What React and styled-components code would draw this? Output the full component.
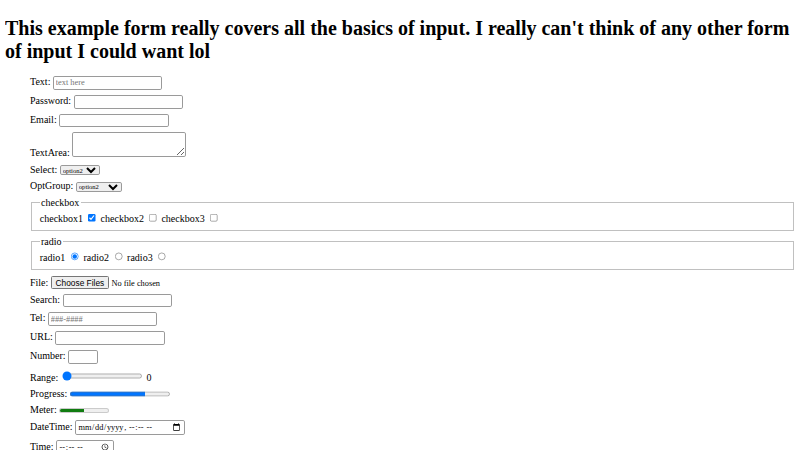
import React from "react";
import styled, { createGlobalStyle } from "styled-components";

const GlobalStyle = createGlobalStyle`
    html {
        zoom: 0.625;
    }

    body {
        margin: 8px;
        font-family: "Liberation Serif", "Times New Roman", serif;
        font-size: 16px;
        color: #000;
        background: #fff;
    }
`;

const StyledTitle = styled.h1`
    font-size: 2em;
    font-weight: bold;
    margin: 19px 0 21px;
`;

const StyledForm = styled.form`
    padding-left: 40px;
`;

const StyledRow = styled.div`
    padding-top: ${(p) => p.$extra || 0}px;
    margin-bottom: 8px;
`;

const StyledGroup = styled.fieldset`
    margin: 0 2px 8px;
    border: 2px groove #c0c0c0;
    padding: 0.35em 0.75em 0.625em;
`;

const StyledInput = styled.input`
    font-family: "Liberation Serif", "Times New Roman", serif;
    font-size: 13.33px;
    box-sizing: border-box;
    width: ${(p) => p.$width || 175}px;
    height: ${(p) => p.$height || 22}px;
    padding: 1px 3px;
    border: 1.6px solid #9a9a9a;
    border-radius: 3px;
`;

const StyledFile = styled.input`
    font-family: "Liberation Serif", "Times New Roman", serif;
    font-size: 13.33px;

    &::file-selector-button {
        font-family: "Liberation Sans", Arial, sans-serif;
        height: 20px;
    }
`;

const StyledTextArea = styled.textarea`
    box-sizing: border-box;
    width: 182px;
    height: 39px;
    border: 1.6px solid #9a9a9a;
    border-radius: 3px;
`;

const StyledSelect = styled.select`
    font-family: "Liberation Serif", "Times New Roman", serif;
    font-size: 10.5px;
    box-sizing: border-box;
    height: 17px;
    width: ${(p) => p.$width}px;
    border: 1.6px solid #9a9a9a;
    border-radius: 3px;
`;

const checks = ["checkbox1", "checkbox2", "checkbox3"];
const radios = ["radio1", "radio2", "radio3"];

const App = () => {
    return (
        <>
            <GlobalStyle />
            <StyledTitle>
                This example form really covers all the basics of input. I really can't think of any
                other form of input I could want lol
            </StyledTitle>
            <StyledForm onSubmit={(e) => e.preventDefault()}>
                <StyledRow>
                    <label>Text: </label>
                    <StyledInput type="text" placeholder="text here" />
                </StyledRow>
                <StyledRow>
                    <label>Password: </label>
                    <StyledInput type="password" />
                </StyledRow>
                <StyledRow>
                    <label>Email: </label>
                    <StyledInput type="email" />
                </StyledRow>
                <StyledRow>
                    <label>TextArea: </label>
                    <StyledTextArea />
                </StyledRow>
                <StyledRow>
                    <label>Select: </label>
                    <StyledSelect $width={65} defaultValue="option2">
                        <option value="option1">option1</option>
                        <option value="option2">option2</option>
                        <option value="option3">option3</option>
                    </StyledSelect>
                </StyledRow>
                <StyledRow>
                    <label>OptGroup: </label>
                    <StyledSelect $width={74} defaultValue="option2">
                        <optgroup label="group one">
                            <option value="option1">option1</option>
                            <option value="option2">option2</option>
                        </optgroup>
                        <optgroup label="group two">
                            <option value="option3">option3</option>
                            <option value="option4">option4</option>
                        </optgroup>
                    </StyledSelect>
                </StyledRow>
                <StyledGroup>
                    <legend>checkbox</legend>
                    {checks.map((name, i) => (
                        <React.Fragment key={name}>
                            <label>{name}</label>{" "}
                            <input type="checkbox" defaultChecked={i === 0} />{" "}
                        </React.Fragment>
                    ))}
                </StyledGroup>
                <StyledGroup>
                    <legend>radio</legend>
                    {radios.map((name, i) => (
                        <React.Fragment key={name}>
                            <label>{name}</label>{" "}
                            <input type="radio" name="radio" defaultChecked={i === 0} />{" "}
                        </React.Fragment>
                    ))}
                </StyledGroup>
                <StyledRow $extra={2}>
                    <label>File: </label>
                    <StyledFile type="file" multiple />
                </StyledRow>
                <StyledRow>
                    <label>Search: </label>
                    <StyledInput type="search" />
                </StyledRow>
                <StyledRow>
                    <label>Tel: </label>
                    <StyledInput type="tel" placeholder="###-####" />
                </StyledRow>
                <StyledRow>
                    <label>URL: </label>
                    <StyledInput type="url" />
                </StyledRow>
                <StyledRow $extra={1}>
                    <label>Number: </label>
                    <StyledInput type="number" $width={48} />
                </StyledRow>
                <StyledRow $extra={1}>
                    <label>Range: </label>
                    <input type="range" min="0" max="100" defaultValue="0" /> <output>0</output>
                </StyledRow>
                <StyledRow>
                    <label>Progress: </label>
                    <progress value="75" max="100" />
                </StyledRow>
                <StyledRow>
                    <label>Meter: </label>
                    <meter value="0.5" min="0" max="1" />
                </StyledRow>
                <StyledRow>
                    <label>DateTime: </label>
                    <StyledInput type="datetime-local" $width={176} $height={24} />
                </StyledRow>
                <StyledRow>
                    <label>Time: </label>
                    <StyledInput type="time" $width={93} $height={24} />
                </StyledRow>
            </StyledForm>
        </>
    );
};

export default App;
